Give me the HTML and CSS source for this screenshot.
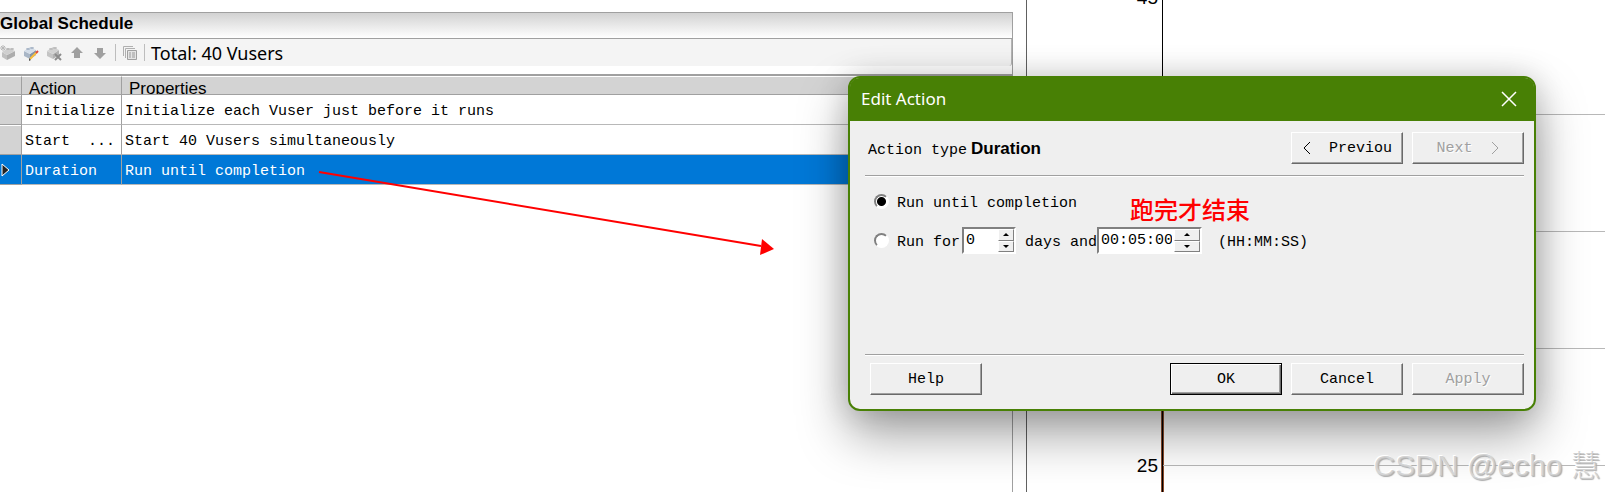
FILE: index.html
```html
<!DOCTYPE html>
<html lang="en">
<head>
  <meta charset="UTF-8">
  <meta name="viewport" content="width=device-width, initial-scale=1.0">
  <title>Global Schedule</title>
  <link rel="stylesheet" href="styles.css">
</head>
<body>
  <main class="workspace">
    <section class="schedule">
      <h1 class="schedule-title">Global Schedule</h1>
      <div class="toolbar">
        <button class="tool" aria-label="Add action" disabled>
          <svg width="16" height="16" viewBox="0 0 16 16">
            <path d="M2 7l5 3v5l-5-3z" fill="#c0c0c0"/>
            <path d="M7 10l8-4v5l-8 4z" fill="#adadad"/>
            <path d="M2 7l6-4 7 3-8 4z" fill="#cfcfcf"/>
            <ellipse cx="8" cy="4" rx="2" ry="1" fill="#b8b8b8"/>
            <ellipse cx="12" cy="4" rx="2" ry="1" fill="#b8b8b8"/>
            <path d="M3 0v6M0 3h6M1 1l4 4M5 1L1 5" stroke="#b8b8b8"/>
          </svg>
        </button>
        <button class="tool" aria-label="Edit action">
          <svg width="16" height="16" viewBox="0 0 16 16">
            <path d="M1 6l6 3v5l-6-3z" fill="#a9b6c6"/>
            <path d="M7 9l6-4v5l-6 4z" fill="#8494a8"/>
            <path d="M1 6l6-4 6 3-6 4z" fill="#d4dde8"/>
            <ellipse cx="5" cy="4" rx="2" ry="1" fill="#a8b5c6"/>
            <ellipse cx="9" cy="3" rx="2" ry="1" fill="#a8b5c6"/>
            <path d="M7 14l7-7" stroke="#f8bd3c" stroke-width="2"/>
            <path d="M13 8l2-2" stroke="#e0483e" stroke-width="2"/>
            <path d="M6 16v-3l2 2z" fill="#555"/>
          </svg>
        </button>
        <button class="tool" aria-label="Delete action" disabled>
          <svg width="16" height="16" viewBox="0 0 16 16">
            <path d="M1 6l6 3v5l-6-3z" fill="#c4c4c4"/>
            <path d="M7 9l6-4v5l-6 4z" fill="#b2b2b2"/>
            <path d="M1 6l6-4 6 3-6 4z" fill="#d2d2d2"/>
            <ellipse cx="5" cy="4" rx="2" ry="1" fill="#bbb"/>
            <ellipse cx="9" cy="3" rx="2" ry="1" fill="#bbb"/>
            <path d="M9 9l6 6M15 9l-6 6" stroke="#8c8c8c" stroke-width="2"/>
          </svg>
        </button>
        <button class="tool" aria-label="Move up" disabled>
          <svg width="16" height="16" viewBox="0 0 16 16">
            <path d="M8 2l6 6h-3v5H5V8H2z" fill="#a0a0a0"/>
          </svg>
        </button>
        <button class="tool" aria-label="Move down" disabled>
          <svg width="16" height="16" viewBox="0 0 16 16">
            <path d="M8 14l6-6h-3V3H5v5H2z" fill="#a0a0a0"/>
          </svg>
        </button>
        <span class="separator"></span>
        <button class="tool" aria-label="Copy" disabled>
          <svg width="16" height="16" viewBox="0 0 16 16">
            <path d="M1.500 11V1.500H11M3.500 13V3.500H13" fill="none" stroke="#b0b0b0"/>
            <path d="M5.500 5.500h9v9h-9z" fill="#e4e4e4" stroke="#a0a0a0"/>
            <path d="M7 8h2M10 8h3M7 10h2M10 10h3M7 12h2M10 12h3" stroke="#999"/>
          </svg>
        </button>
        <span class="separator"></span>
        <span class="total">Total: 40 Vusers</span>
      </div>
      <table class="actions">
        <thead>
          <tr>
            <th class="row-head"></th>
            <th class="col-action"><span>Action</span></th>
            <th><span>Properties</span></th>
          </tr>
        </thead>
        <tbody>
          <tr>
            <td class="row-head"></td>
            <td>Initialize</td>
            <td>Initialize each Vuser just before it runs</td>
          </tr>
          <tr>
            <td class="row-head"></td>
            <td>Start&nbsp; ...</td>
            <td>Start 40 Vusers simultaneously</td>
          </tr>
          <tr class="selected">
            <td class="row-head">
              <svg width="10" height="14" viewBox="0 0 10 14">
                <path d="M2 1l7 6-7 6z" fill="#222" stroke="#fff"/>
              </svg>
            </td>
            <td>Duration</td>
            <td>Run until completion</td>
          </tr>
        </tbody>
      </table>
    </section>

    <section class="chart">
      <div class="tick"><span class="tick-label">45</span><div class="plot"></div></div>
      <div class="tick"><span class="tick-label"></span><div class="plot"><i></i></div></div>
      <div class="tick"><span class="tick-label"></span><div class="plot"><i></i></div></div>
      <div class="tick"><span class="tick-label"></span><div class="plot"><i></i></div></div>
      <div class="tick"><span class="tick-label">25</span><div class="plot series"><i></i></div></div>
    </section>
  </main>

  <form class="dialog" role="dialog" aria-labelledby="dialogTitle">
    <header class="dialog-title">
      <h2 id="dialogTitle">Edit Action</h2>
      <button type="button" class="close" aria-label="Close">
        <svg width="16" height="16" viewBox="0 0 16 16">
          <path d="M1 1l14 14M15 1L1 15" stroke="#fff" stroke-width="1.500"/>
        </svg>
      </button>
    </header>
    <div class="dialog-body">
      <div class="action-type">
        <p>Action type<strong>Duration</strong></p>
        <button type="button" class="btn">
          <svg width="9" height="14" viewBox="0 0 9 14"><path d="M8 1L2 7l6 6" fill="none" stroke="currentColor"/></svg>
          Previou
        </button>
        <button type="button" class="btn" disabled>
          Next
          <svg width="9" height="14" viewBox="0 0 9 14"><path d="M1 1l6 6-6 6" fill="none" stroke="currentColor"/></svg>
        </button>
      </div>
      <div class="options">
        <div class="option">
          <input type="radio" name="duration" id="untilDone" checked>
          <label for="untilDone">Run until completion</label>
        </div>
        <div class="option">
          <input type="radio" name="duration" id="runFor">
          <label for="runFor">Run for</label>
          <span class="spinner days">
            <input type="text" value="0" aria-label="Days">
            <span class="arrows">
              <button type="button" aria-label="More days"><svg width="6" height="3"><path d="M0 3l3-3 3 3z"/></svg></button>
              <button type="button" aria-label="Fewer days"><svg width="6" height="3"><path d="M0 0l3 3 3-3z"/></svg></button>
            </span>
          </span>
          <span class="between">days and</span>
          <span class="spinner time">
            <input type="text" value="00:05:00" aria-label="Time">
            <span class="arrows">
              <button type="button" aria-label="More time"><svg width="6" height="3"><path d="M0 3l3-3 3 3z"/></svg></button>
              <button type="button" aria-label="Less time"><svg width="6" height="3"><path d="M0 0l3 3 3-3z"/></svg></button>
            </span>
          </span>
          <span class="format">(HH:MM:SS)</span>
        </div>
      </div>
      <footer class="dialog-buttons">
        <button type="button" class="btn help">Help</button>
        <button type="submit" class="btn default">OK</button>
        <button type="button" class="btn">Cancel</button>
        <button type="button" class="btn" disabled>Apply</button>
      </footer>
    </div>
    <span class="note" lang="zh">跑完才结束</span>
  </form>

  <svg class="arrow" width="460" height="90" viewBox="0 0 460 90">
    <path d="M4 6l442 74" stroke="#f00" stroke-width="2"/>
    <path d="M447 73l12 10-14 6z" fill="#f00"/>
  </svg>
  <span class="watermark">CSDN @echo 慧</span>
</body>
</html>
```
FILE: styles.css
```css
* {
  margin: 0;
  padding: 0;
  box-sizing: border-box;
}

body {
  position: relative;
  height: 100vh;
  overflow: hidden;
  background: #fff;
  color: #000;
  font-family: "Liberation Mono", monospace;
  font-size: 15px;
}

button,
input {
  font: inherit;
  color: inherit;
}

.workspace {
  display: grid;
  grid-template-columns: 1013px 1fr;
  column-gap: 13px;
  height: 100%;
}

/* Schedule */
.schedule {
  margin-top: 12px;
  border-top: 1px solid #a0a0a0;
  border-right: 1px solid #a0a0a0;
}

.schedule-title {
  height: 26px;
  border-bottom: 1px solid #a0a0a0;
  background: linear-gradient(#d2d2d2, #fff);
  font: bold 17px/21px "Liberation Sans", sans-serif;
}

.toolbar {
  display: flex;
  align-items: center;
  gap: 7px;
  height: 27px;
  margin-bottom: 8px;
  border-right: 1px solid #b4b4b4;
  border-radius: 0 0 3px 0;
  background: #f4f4f4;
}

.tool {
  display: flex;
  width: 16px;
  height: 16px;
  border: none;
  background: none;
}

.separator {
  width: 1px;
  height: 17px;
  background: #bdbdbd;
}

.tool + .separator + .tool {
  margin: 0 -1px;
}

.total {
  margin-left: -1px;
  font: 18px/26px "Noto Sans", sans-serif;
}

.actions {
  width: 100%;
  border-top: 2px solid #a0a0a0;
  border-spacing: 0;
  table-layout: fixed;
}

.actions th {
  height: 19px;
  border-top: 1px solid #fff;
  border-bottom: 1px solid #a0a0a0;
  background: #d3d3d3;
  font: 17px/23px "Liberation Sans", sans-serif;
  text-align: left;
}

.actions th span {
  display: block;
  height: 17px;
  padding-left: 7px;
  overflow: hidden;
}

.actions td {
  height: 30px;
  padding: 4px 0 0 3px;
  border-bottom: 1px solid #b8b8b8;
  white-space: nowrap;
}

.actions th:not(:last-child),
.actions td:not(:last-child) {
  border-right: 1px solid #a0a0a0;
}

.actions .row-head {
  width: 22px;
  padding: 0;
}

.actions td.row-head {
  border-bottom-color: #a0a0a0;
  background: #d3d3d3;
  box-shadow: inset 0 1px #fff;
}

.actions .col-action {
  width: 100px;
}

.actions .selected td {
  background: #0078d7;
  box-shadow: none;
  color: #fff;
}

.row-head svg {
  display: block;
}

/* Chart */
.chart {
  border-left: 1px solid #606060;
  overflow: hidden;
}

.tick {
  display: flex;
  align-items: center;
  height: 117px;
  font: 19px "Liberation Sans", sans-serif;
}

.tick:first-child {
  margin-top: -61px;
}

.tick-label {
  width: 135px;
  padding-right: 4px;
  text-align: right;
}

.plot {
  display: flex;
  flex: 1;
  align-self: stretch;
  align-items: center;
  border-left: 1px solid #000;
}

.plot i {
  flex: 1;
  height: 1px;
  background: #b8b8b8;
}

.plot.series {
  box-shadow: -1px 0 #8a4a2c, inset 1px 0 #8a4a2c;
}

/* Dialog */
.dialog {
  position: absolute;
  top: 76px;
  left: 848px;
  right: 69px;
  border: 2px solid #488005;
  border-radius: 12px;
  background: #efefef;
  box-shadow: 0 24px 50px rgba(0, 0, 0, 0.36), 0 0 30px rgba(0, 0, 0, 0.16);
}

.dialog-title {
  display: flex;
  align-items: center;
  justify-content: space-between;
  height: 43px;
  padding: 0 17px 2px 11px;
  border-radius: 9px 9px 0 0;
  background: #488005;
  color: #fff;
}

.dialog-title h2 {
  font: 17px "Noto Sans", sans-serif;
}

.close {
  display: flex;
  border: none;
  background: none;
}

.dialog-body {
  padding: 11px 10px 14px 15px;
}

.action-type {
  display: flex;
  gap: 9px;
  height: 44px;
  border-bottom: 1px solid #a0a0a0;
  box-shadow: 0 1px #fff;
}

.action-type p {
  flex: 1;
  padding-left: 3px;
  line-height: 38px;
}

.action-type strong {
  margin-left: 4px;
  font: bold 17px "Liberation Sans", sans-serif;
}

.btn {
  display: flex;
  align-items: center;
  justify-content: center;
  gap: 18px;
  width: 112px;
  height: 32px;
  border: 1px solid;
  border-color: #fff #696969 #696969 #fff;
  background: #efefef;
  box-shadow: inset -1px -1px #a0a0a0;
}

.btn:disabled {
  color: #a0a0a0;
  text-shadow: 1px 1px #fff;
}

.btn.default {
  border-color: #000;
  box-shadow: inset 1px 1px #fff, inset -1px -1px #696969, inset -2px -2px #a0a0a0;
}

.options {
  height: 179px;
  padding: 11px 0 0 9px;
  border-bottom: 1px solid #a0a0a0;
  box-shadow: 0 1px #fff;
}

.option {
  display: flex;
  align-items: center;
  height: 29px;
}

.option + .option {
  margin-top: 10px;
}

.option label,
.between,
.format {
  padding-top: 3px;
}

.option input[type="radio"] {
  appearance: none;
  width: 15px;
  height: 15px;
  margin-right: 8px;
  border: 2px solid;
  border-color: #808080 #fff #fff #808080;
  border-radius: 50%;
  background: #fff;
}

.option input[type="radio"]:checked {
  background: radial-gradient(circle, #000 4px, #fff 5px);
}

.spinner {
  display: flex;
  height: 27px;
  border: 2px solid;
  border-color: #808080 #fff #fff #808080;
  background: #fff;
}

.spinner input {
  flex: 1;
  min-width: 0;
  padding: 0 2px;
  border: none;
  background: none;
}

.days {
  width: 54px;
  margin-left: 2px;
}

.time {
  width: 105px;
}

.arrows {
  display: flex;
  flex-direction: column;
  width: 16px;
}

.time .arrows {
  width: 26px;
}

.arrows button {
  display: flex;
  flex: 1;
  align-items: center;
  justify-content: center;
  border: 1px solid;
  border-color: #fff #808080 #808080 #fff;
  background: #efefef;
}

.between {
  margin-left: 9px;
}

.format {
  margin-left: 16px;
}

.dialog-buttons {
  display: flex;
  gap: 9px;
  padding-top: 8px;
}

.help {
  margin: 0 auto 0 5px;
}

/* Annotations */
.note {
  position: absolute;
  top: 114px;
  left: 280px;
  color: #f00;
  font: 24px/34px "Noto Sans CJK SC", sans-serif;
  font-weight: 500;
}

.arrow {
  position: absolute;
  top: 166px;
  left: 315px;
}

.watermark {
  position: absolute;
  right: 4px;
  bottom: 6px;
  color: rgba(200, 200, 200, 0.8);
  font: 30px/40px "Liberation Sans", "Noto Sans CJK SC", sans-serif;
  font-weight: 300;
  text-shadow: -1px -1px #fff, 1px 1px 1px #aaa;
}
```
